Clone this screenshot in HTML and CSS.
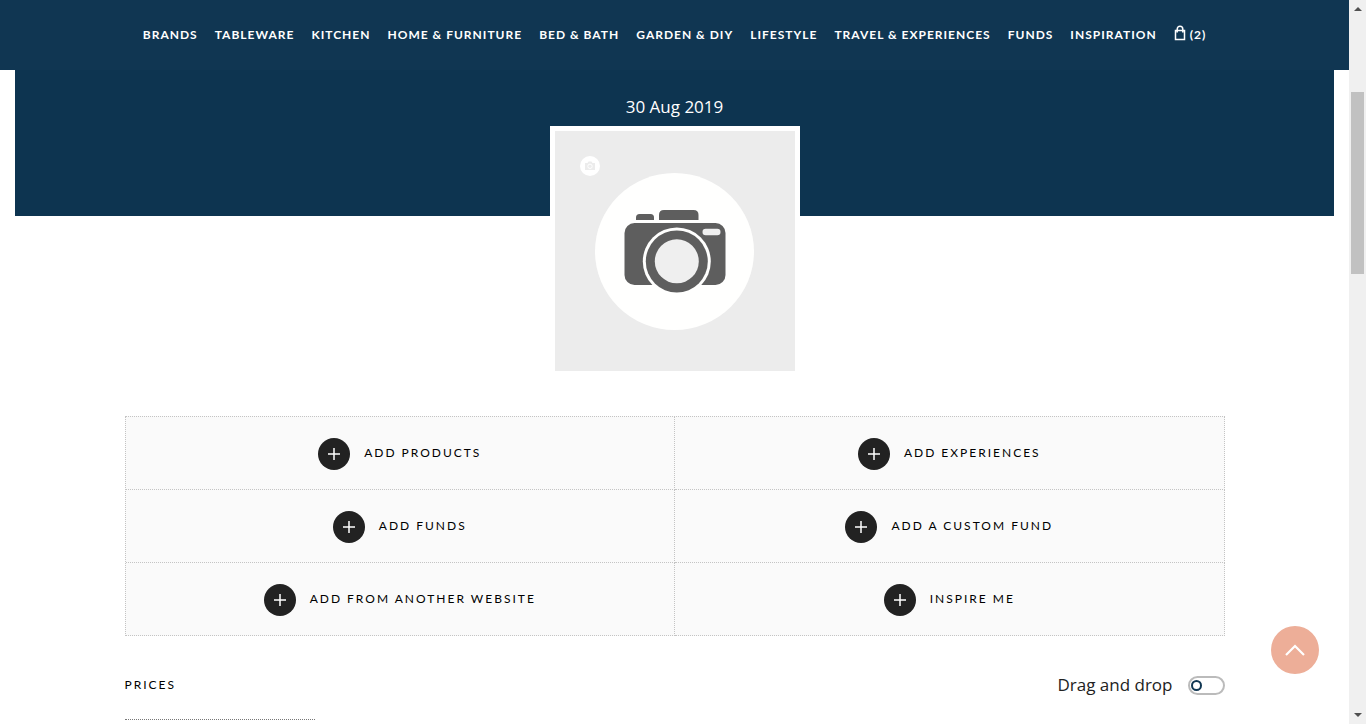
FILE: index.html
```html
<!DOCTYPE html>
<html lang="en">
<head>
  <meta charset="utf-8">
  <meta name="viewport" content="width=device-width, initial-scale=1">
  <title>Gift List</title>
  <link rel="stylesheet" href="styles.css">
</head>
<body class="window">
  <div class="page">
    <header class="site-header">
      <nav class="nav" aria-label="Main">
        <a class="nav-link" href="#">BRANDS</a>
        <a class="nav-link" href="#">TABLEWARE</a>
        <a class="nav-link" href="#">KITCHEN</a>
        <a class="nav-link" href="#">HOME &amp; FURNITURE</a>
        <a class="nav-link" href="#">BED &amp; BATH</a>
        <a class="nav-link" href="#">GARDEN &amp; DIY</a>
        <a class="nav-link" href="#">LIFESTYLE</a>
        <a class="nav-link" href="#">TRAVEL &amp; EXPERIENCES</a>
        <a class="nav-link" href="#">FUNDS</a>
        <a class="nav-link" href="#">INSPIRATION</a>
        <a class="nav-link nav-bag" href="#" aria-label="Bag, 2 items">
          <svg class="bag-icon" viewBox="0 0 12 16" aria-hidden="true">
            <path d="M1.500 5.500h9v9h-9z M3.200 7.500V4.200a2.800 3 0 0 1 5.600 0v3.300" fill="none" stroke="currentColor" stroke-width="1.500"/>
          </svg>
          <span>(2)</span>
        </a>
      </nav>
    </header>

    <main>
      <section class="hero">
        <time class="hero-date" datetime="2019-08-30">30 Aug 2019</time>
      </section>

      <div class="photo">
        <svg class="photo-image" viewBox="0 0 240 240" role="img" aria-label="Camera placeholder">
          <rect width="240" height="240" fill="#ececec"/>
          <ellipse cx="119.500" cy="120.500" rx="79.500" ry="78.500" fill="#fffffe"/>
          <g fill="#5e5e5e">
            <path d="M81 89v-2.500q0-3.500 3.500-3.500h11q3.500 0 3.500 3.500V89z"/>
            <path d="M104 89v-5q0-5 5-5h29.500q5 0 5 5v5z"/>
            <rect x="69.500" y="92" width="101" height="62" rx="10"/>
          </g>
          <circle cx="121.800" cy="130.500" r="34" fill="#fffffe"/>
          <circle cx="121.800" cy="130.500" r="31" fill="#5e5e5e"/>
          <circle cx="121.800" cy="130.300" r="22" fill="#efefef"/>
          <rect x="147.500" y="97.800" width="18" height="6.500" rx="3.200" fill="#efefef"/>
        </svg>
        <button class="photo-edit" type="button" aria-label="Change photo">
          <svg class="photo-edit-icon" viewBox="0 0 12 10" aria-hidden="true">
            <path d="M1 2h2.500l1-1.500h3l1 1.500H11v7H1z" fill="#ececec"/>
            <circle cx="6" cy="5.300" r="2.200" fill="#ececec" stroke="#fff" stroke-width="1"/>
          </svg>
        </button>
      </div>

      <div class="container">
        <div class="actions">
          <a class="action" href="#"><span class="plus"><svg class="plus-icon" viewBox="0 0 12 12" aria-hidden="true"><path d="M6 0v12M0 6h12"/></svg></span><span>ADD PRODUCTS</span></a>
          <a class="action" href="#"><span class="plus"><svg class="plus-icon" viewBox="0 0 12 12" aria-hidden="true"><path d="M6 0v12M0 6h12"/></svg></span><span>ADD EXPERIENCES</span></a>
          <a class="action" href="#"><span class="plus"><svg class="plus-icon" viewBox="0 0 12 12" aria-hidden="true"><path d="M6 0v12M0 6h12"/></svg></span><span>ADD FUNDS</span></a>
          <a class="action" href="#"><span class="plus"><svg class="plus-icon" viewBox="0 0 12 12" aria-hidden="true"><path d="M6 0v12M0 6h12"/></svg></span><span>ADD A CUSTOM FUND</span></a>
          <a class="action" href="#"><span class="plus"><svg class="plus-icon" viewBox="0 0 12 12" aria-hidden="true"><path d="M6 0v12M0 6h12"/></svg></span><span>ADD FROM ANOTHER WEBSITE</span></a>
          <a class="action" href="#"><span class="plus"><svg class="plus-icon" viewBox="0 0 12 12" aria-hidden="true"><path d="M6 0v12M0 6h12"/></svg></span><span>INSPIRE ME</span></a>
        </div>

        <div class="toolbar">
          <h2 class="filter-title">PRICES</h2>
          <div class="drag-option">
            <label class="drag-label" for="drag">Drag and drop</label>
            <input class="switch" id="drag" type="checkbox" role="switch">
          </div>
        </div>
      </div>
    </main>

    <button class="to-top" type="button" aria-label="Back to top">
      <svg class="to-top-icon" viewBox="0 0 20 12" aria-hidden="true"><path d="M1 11l9-9 9 9" fill="none" stroke="#fff" stroke-width="2.200"/></svg>
    </button>
  </div>

  <div class="scrollbar" aria-hidden="true">
    <svg class="scroll-arrow" viewBox="0 0 8 4"><path d="M4 0l4 4H0z"/></svg>
    <div class="scroll-track"><div class="scroll-thumb"></div></div>
    <svg class="scroll-arrow" viewBox="0 0 8 4"><path d="M0 0h8L4 4z"/></svg>
  </div>
</body>
</html>
```
FILE: styles.css
```css
*,
*::before {
  box-sizing: border-box;
}

.window {
  display: flex;
  height: 100vh;
  margin: 0;
  overflow: hidden;
  background: #fff;
  color: #000;
  font-family: Lato, "Liberation Sans", sans-serif;
}

.page {
  flex: 1;
  min-width: 0;
  overflow: hidden;
}

.site-header {
  display: flex;
  justify-content: center;
  align-items: center;
  height: 70px;
  background: #103652;
}

.nav {
  display: flex;
  align-items: center;
  gap: 17px;
}

.nav-link {
  color: #fff;
  font-size: 12px;
  font-weight: 700;
  line-height: 20px;
  letter-spacing: 1px;
  text-decoration: none;
  white-space: nowrap;
}

.nav-bag {
  display: flex;
  align-items: center;
  gap: 4px;
}

.bag-icon {
  width: 12px;
  height: 16px;
  margin-bottom: 4px;
}

.hero {
  display: flex;
  justify-content: center;
  height: 146px;
  margin: 0 15px;
  padding-top: 25px;
  background: #0d3450;
  color: #fff;
}

.hero-date {
  font-family: "Open Sans", "Noto Sans", sans-serif;
  font-size: 17px;
  line-height: 24px;
}

.photo {
  position: relative;
  width: 250px;
  margin: -90px auto 40px;
  border: 5px solid #fff;
}

.photo-image {
  display: block;
  width: 100%;
}

.photo-edit {
  position: absolute;
  top: 25px;
  left: 25px;
  display: grid;
  place-items: center;
  width: 20px;
  height: 20px;
  padding: 0;
  border: 0;
  border-radius: 50%;
  background: #fff;
}

.photo-edit-icon {
  width: 12px;
  height: 10px;
}

.container {
  max-width: 1100px;
  margin: 0 auto;
}

.actions {
  display: grid;
  grid-template-columns: 1fr 1fr;
  border-top: 1px dotted #c4c4c4;
  border-left: 1px dotted #c4c4c4;
  background: #fafafa;
}

.action {
  display: flex;
  justify-content: center;
  align-items: center;
  gap: 14px;
  height: 73px;
  border-right: 1px dotted #c4c4c4;
  border-bottom: 1px dotted #c4c4c4;
  color: #000;
  font-size: 12px;
  line-height: 20px;
  letter-spacing: 2px;
  text-decoration: none;
}

.plus {
  display: grid;
  place-items: center;
  width: 32px;
  height: 32px;
  margin-top: 2px;
  border-radius: 50%;
  background: #222;
}

.plus-icon {
  width: 12px;
  height: 12px;
  fill: none;
  stroke: #fff;
  stroke-width: 1.5;
}

.toolbar {
  display: flex;
  justify-content: space-between;
  align-items: flex-start;
  padding-top: 36px;
}

.filter-title {
  width: 190px;
  margin: 0;
  padding: 3px 0 24px;
  border-bottom: 1px dotted #777;
  font-size: 12px;
  font-weight: 400;
  line-height: 20px;
  letter-spacing: 2px;
}

.drag-option {
  display: flex;
  align-items: center;
  gap: 15px;
}

.drag-label {
  color: #222;
  font-family: "Open Sans", "Noto Sans", sans-serif;
  font-size: 17px;
  line-height: 26px;
}

.switch {
  display: flex;
  align-items: center;
  width: 37px;
  height: 19px;
  margin: 0;
  padding: 0 1px;
  border: 2px solid #bbb;
  border-radius: 10px;
  appearance: none;
  background: #fff;
}

.switch::before {
  width: 11px;
  height: 11px;
  border: 2px solid #103652;
  border-radius: 50%;
  content: "";
}

.switch:checked {
  justify-content: flex-end;
}

.to-top {
  position: fixed;
  right: 47px;
  bottom: 50px;
  display: grid;
  place-items: center;
  width: 48px;
  height: 48px;
  padding: 0;
  border: 0;
  border-radius: 50%;
  background: #edae98;
}

.to-top-icon {
  width: 20px;
  height: 12px;
}

.scrollbar {
  display: flex;
  flex-direction: column;
  align-items: center;
  width: 17px;
  padding: 7px 2px;
  background: #f0f0f0;
}

.scroll-arrow {
  width: 8px;
  height: 4px;
  fill: #505050;
}

.scroll-track {
  flex: 1;
  width: 100%;
  padding-top: 81px;
}

.scroll-thumb {
  height: 182px;
  background: #c1c1c1;
}
```
